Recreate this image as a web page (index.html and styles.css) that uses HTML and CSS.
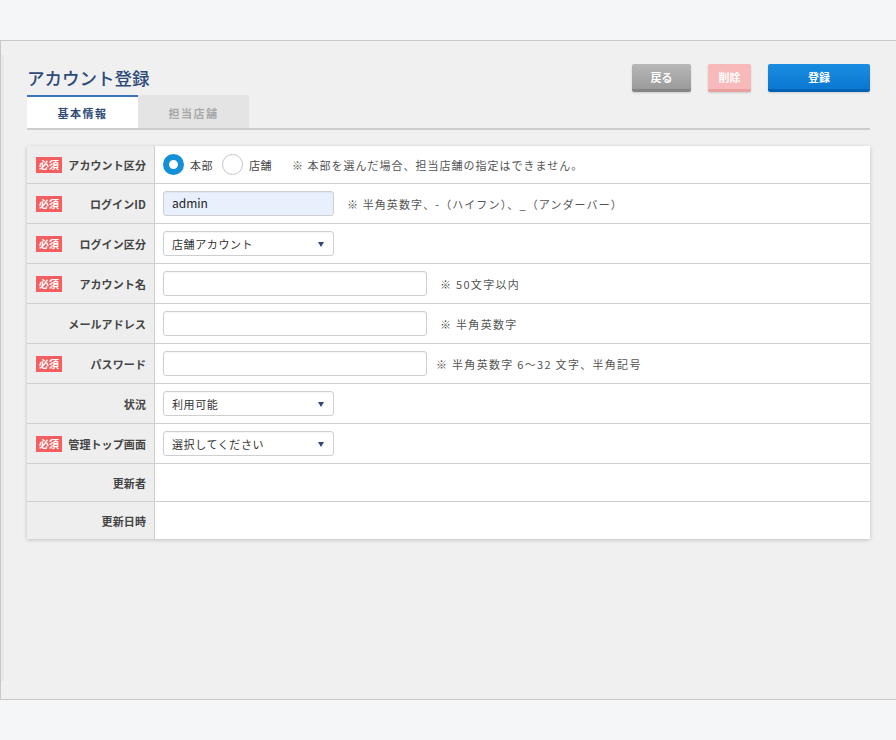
FILE: index.html
```html
<!DOCTYPE html>
<html lang="ja">
<head>
<meta charset="utf-8">
<link rel="stylesheet" href="styles.css">
</head>
<body>
<div class="frame">
  <div class="edge"></div>
  <div class="content">
    <div class="header">
      <h1 class="title">アカウント登録</h1>
      <div class="actions">
        <button class="btn btn-back">戻る</button>
        <button class="btn btn-del">削除</button>
        <button class="btn btn-save">登録</button>
      </div>
    </div>
    <div class="tabs">
      <div class="tab active">基本情報</div>
      <div class="tab">担当店舗</div>
    </div>
    <div class="table">
      <div class="row r38">
        <div class="label"><span class="req">必須</span><span class="lt">アカウント区分</span></div>
        <div class="cell">
          <span class="radio on"></span><span class="rlabel">本部</span>
          <span class="radio"></span><span class="rlabel">店舗</span>
          <span class="note note-r">※ 本部を選んだ場合、担当店舗の指定はできません。</span>
        </div>
      </div>
      <div class="row">
        <div class="label"><span class="req">必須</span><span class="lt">ログインID</span></div>
        <div class="cell">
          <div class="input short filled">admin</div>
          <span class="note note-id">※ 半角英数字、-（ハイフン）、_（アンダーバー）</span>
        </div>
      </div>
      <div class="row">
        <div class="label"><span class="req">必須</span><span class="lt">ログイン区分</span></div>
        <div class="cell">
          <div class="input short select">店舗アカウント<span class="arrow"></span></div>
        </div>
      </div>
      <div class="row">
        <div class="label"><span class="req">必須</span><span class="lt">アカウント名</span></div>
        <div class="cell">
          <div class="input wide"></div>
          <span class="note">※ 50文字以内</span>
        </div>
      </div>
      <div class="row">
        <div class="label"><span class="lt">メールアドレス</span></div>
        <div class="cell">
          <div class="input wide"></div>
          <span class="note">※ 半角英数字</span>
        </div>
      </div>
      <div class="row">
        <div class="label"><span class="req">必須</span><span class="lt">パスワード</span></div>
        <div class="cell">
          <div class="input wide"></div>
          <span class="note note-p">※ 半角英数字 6～32 文字、半角記号</span>
        </div>
      </div>
      <div class="row">
        <div class="label"><span class="lt">状況</span></div>
        <div class="cell">
          <div class="input short select">利用可能<span class="arrow"></span></div>
        </div>
      </div>
      <div class="row">
        <div class="label"><span class="req">必須</span><span class="lt">管理トップ画面</span></div>
        <div class="cell">
          <div class="input short select">選択してください<span class="arrow"></span></div>
        </div>
      </div>
      <div class="row r38">
        <div class="label"><span class="lt">更新者</span></div>
        <div class="cell"></div>
      </div>
      <div class="row r37 last">
        <div class="label"><span class="lt">更新日時</span></div>
        <div class="cell"></div>
      </div>
    </div>
  </div>
</div>
</body>
</html>
```
FILE: styles.css
```css
* { box-sizing: border-box; }
html, body { margin: 0; padding: 0; }
body {
  background: #f5f6f8;
  font-family: "Noto Sans CJK JP", "Noto Sans", sans-serif;
  color: #444;
  padding-top: 40px;
  height: 740px;
  overflow: hidden;
}
.frame {
  height: 660px;
  border: 1px solid #c8c8c8;
  border-right: none;
  background: #f0f0f0;
  display: flex;
}
.edge {
  width: 3px;
  margin-top: 14px;
  margin-bottom: 18px;
  background: #e8e8e8;
  flex: none;
}
.content {
  width: 843px;
  margin-left: 23px;
}
.header {
  display: flex;
  justify-content: space-between;
  align-items: flex-start;
  padding-top: 23px;
  height: 54px;
}
.title {
  margin: 0;
  padding-top: 0;
  font-size: 17.5px;
  font-weight: 500;
  color: #2d4a78;
  line-height: 27px;
  letter-spacing: 0;
}
.actions { display: flex; gap: 17px; }
.btn {
  border: none;
  border-radius: 2px;
  height: 28px;
  font-family: inherit;
  font-size: 11px;
  font-weight: 700;
  color: #fff;
  padding: 0;
  box-shadow: 0 1px 2px rgba(0,0,0,0.15);
}
.btn-back {
  width: 59px;
  background: linear-gradient(#b8b8b8, #9b9b9b);
  border-bottom: 3px solid #858585;
}
.btn-del {
  width: 43px;
  background: #f7b9b9;
  border-bottom: 3px solid #e9a0a0;
}
.btn-save {
  width: 102px;
  background: linear-gradient(#1a8de0, #0a78d2);
  border-bottom: 3px solid #0062b4;
}
.tabs {
  display: flex;
  border-bottom: 2px solid #cdcdcd;
  height: 35px;
}
.tab {
  width: 111px;
  height: 33px;
  display: flex;
  align-items: center;
  justify-content: center;
  font-size: 11px;
  font-weight: 700;
  color: #a8a8a8;
  background: #e4e4e4;
  letter-spacing: 1.5px;
  padding-top: 2px;
}
.tab.active {
  background: #fff;
  color: #2d4a78;
  border-top: 2px solid #3b73bd;
  padding-top: 0;
}
.table {
  margin-top: 16px;
  background: #fff;
  box-shadow: 0 1px 4px rgba(0,0,0,0.2);
}
.row {
  display: flex;
  height: 40px;
  border-bottom: 1px solid #cfcfcf;
}
.row.r38 { height: 38px; }
.row.r37 { height: 37px; }
.row.last { border-bottom: none; }
.label {
  width: 128px;
  flex: none;
  background: #eeeeee;
  border-right: 1px solid #cfcfcf;
  display: flex;
  align-items: center;
  padding: 0 8px 0 9px;
}
.req {
  background: #f45e5e;
  color: #fff;
  font-size: 10px;
  font-weight: 700;
  width: 26px;
  height: 16px;
  line-height: 16px;
  text-align: center;
  flex: none;
}
.lt {
  margin-left: auto;
  font-size: 11px;
  font-weight: 700;
  color: #444;
  letter-spacing: 0.1px;
}
.cell {
  flex: 1;
  display: flex;
  align-items: center;
  padding-left: 8px;
}
.radio {
  width: 21px;
  height: 21px;
  border-radius: 50%;
  border: 1px solid #c4c4c4;
  background: #fff;
  flex: none;
}
.radio.on {
  border: 6px solid #1490d8;
  background: #fff;
}
.rlabel {
  font-size: 11px;
  color: #444;
  margin: 0 9px 0 6px;
  letter-spacing: 0.5px;
}
.note {
  font-size: 11px;
  color: #555;
  margin-left: 13px;
  letter-spacing: 1.3px;
}
.note-r { margin-left: 11px; letter-spacing: 1.0px; }
.note-id { letter-spacing: 1.1px; }
.note-p { margin-left: 9px; }
.input {
  height: 25px;
  border: 1px solid #cfcfcf;
  border-radius: 3px;
  background: #fff;
  font-size: 11px;
  color: #333;
  display: flex;
  align-items: center;
  padding-left: 8px;
  position: relative;
  box-shadow: inset 0 1px 1px rgba(0,0,0,0.04);
}
.input.short { width: 171px; }
.input.wide { width: 264px; }
.input.filled { background: #e8f0fe; font-size: 12px; color: #222; padding-bottom: 2px; }
.input.select { letter-spacing: 0.6px; }
.arrow {
  position: absolute;
  right: 9px;
  top: 10px;
  width: 0;
  height: 0;
  border-left: 3.5px solid transparent;
  border-right: 3.5px solid transparent;
  border-top: 5px solid #2d4a78;
}
```
